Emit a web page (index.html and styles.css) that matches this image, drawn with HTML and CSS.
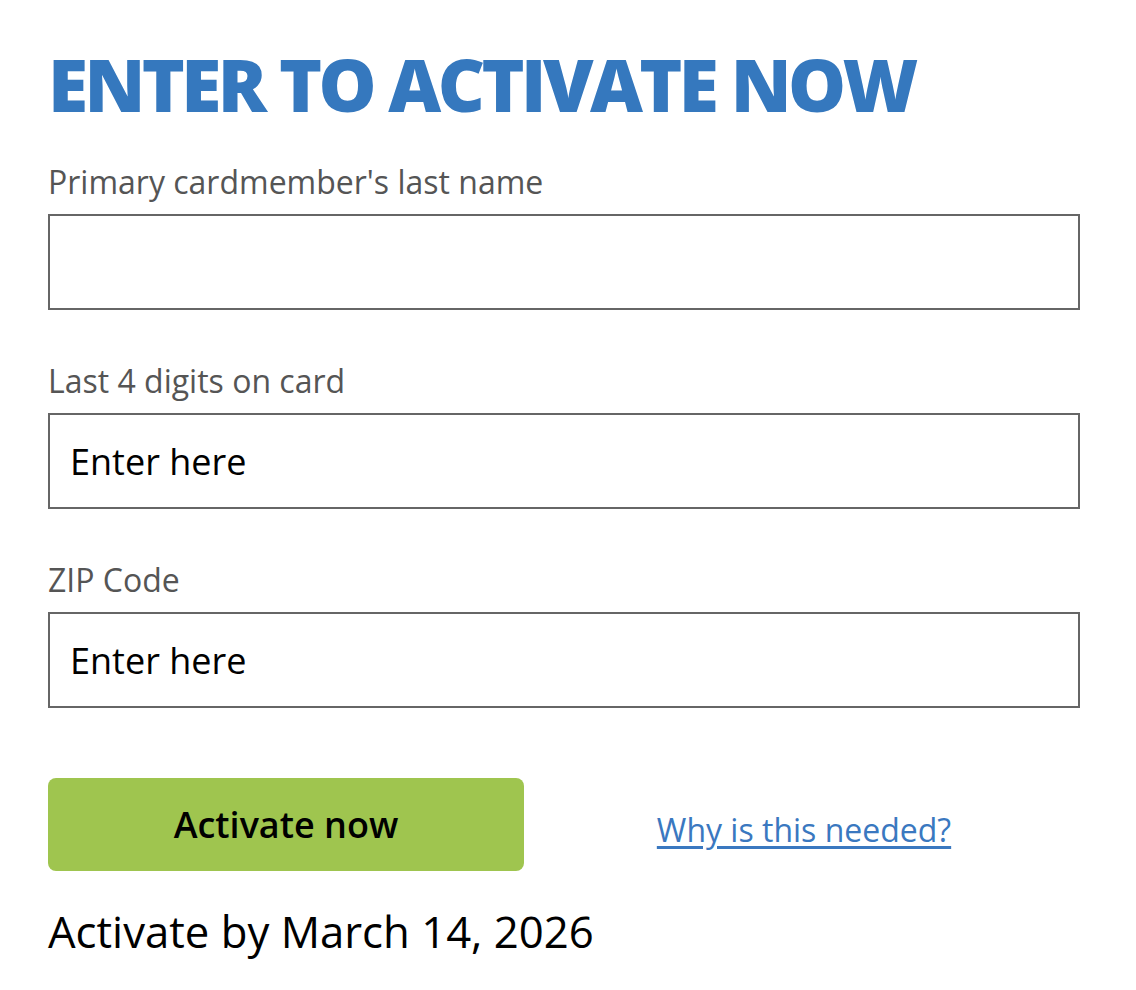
FILE: index.html
```html
<!DOCTYPE html>
<html lang="en">
<head>
<meta charset="utf-8">
<title>Enter to activate now</title>
<link rel="stylesheet" href="styles.css">
</head>
<body>
<main class="activate">
  <h1 class="title">ENTER TO ACTIVATE NOW</h1>
  <form class="form">
    <div class="field">
      <label class="label" for="lastname">Primary cardmember's last name</label>
      <input class="input" id="lastname" type="text">
    </div>
    <div class="field">
      <label class="label" for="digits">Last 4 digits on card</label>
      <input class="input" id="digits" type="text" placeholder="Enter here">
    </div>
    <div class="field">
      <label class="label" for="zip">ZIP Code</label>
      <input class="input" id="zip" type="text" placeholder="Enter here">
    </div>
    <div class="actions">
      <button class="btn" type="button">Activate now</button>
      <div class="why"><a href="#" class="why-link">Why is this needed?</a></div>
    </div>
  </form>
  <p class="deadline">Activate by March 14, 2026</p>
</main>
</body>
</html>
```

FILE: styles.css
```css
* { box-sizing: border-box; }
body {
  margin: 0;
  background: #fff;
  font-family: "Open Sans", "Noto Sans", sans-serif;
}
.activate {
  padding: 40px 56px 0 48px;
}
.title {
  margin: 0;
  font-size: 73px;
  line-height: 88px;
  font-weight: 800;
  color: #3578be;
  letter-spacing: -3.6px;
}
.form {
  display: flex;
  flex-direction: column;
  margin-top: 34px;
}
.field {
  display: flex;
  flex-direction: column;
  margin-bottom: 51px;
}
.label {
  font-size: 32px;
  line-height: 40px;
  color: #555;
  margin-bottom: 12px;
}
.input {
  width: 1032px;
  height: 96px;
  border: 2px solid #666;
  border-radius: 0;
  padding: 0 20px;
  font-family: inherit;
  font-size: 36px;
  color: #000;
  outline: none;
}
.input::placeholder { color: #000; opacity: 1; }
.actions {
  display: flex;
  align-items: center;
  margin-top: 19px;
  width: 1032px;
}
.btn {
  width: 476px;
  height: 93px;
  background: #9fc54f;
  border: none;
  border-radius: 8px;
  font-family: inherit;
  font-size: 36px;
  font-weight: 600;
  color: #000;
}
.why {
  flex: 1;
  text-align: center;
  padding-top: 10px;
  padding-left: 4px;
}
.why-link {
  font-size: 32px;
  color: #3a78c0;
  text-decoration: underline;
  text-underline-offset: 4px;
}
.deadline {
  margin: 30px 0 0;
  font-size: 43.7px;
  line-height: 60px;
  color: #000;
}
```
